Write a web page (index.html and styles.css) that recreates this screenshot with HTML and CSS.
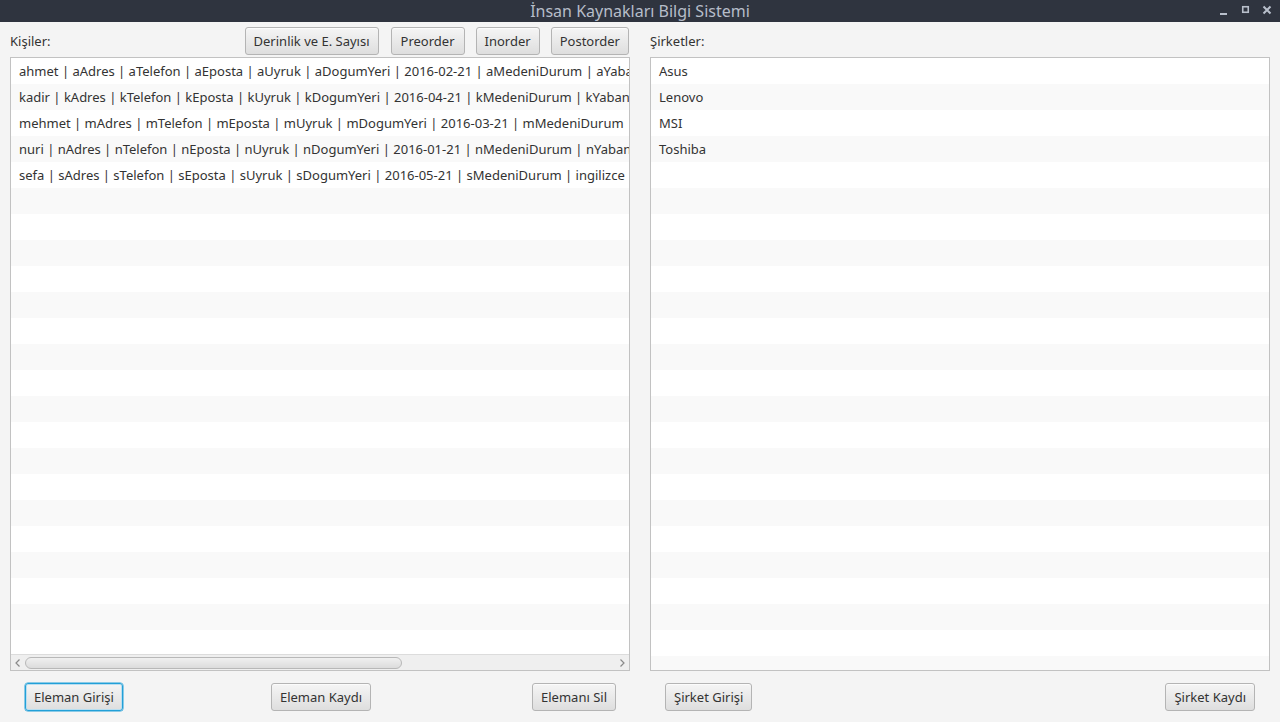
FILE: index.html
```html
<!DOCTYPE html>
<html lang="tr">
<head>
<meta charset="utf-8">
<title>İnsan Kaynakları Bilgi Sistemi</title>
<link rel="stylesheet" href="styles.css">
</head>
<body>
<div class="window">
  <div class="titlebar">
    <div class="title">İnsan Kaynakları Bilgi Sistemi</div>
    <div class="controls">
      <svg class="ctl" width="12" height="12" viewBox="0 0 12 12"><rect x="3" y="9" width="7" height="2" fill="#b8bfcb"/></svg>
      <svg class="ctl" width="12" height="12" viewBox="0 0 12 12"><rect x="3.75" y="2.75" width="5.5" height="5.5" fill="none" stroke="#b8bfcb" stroke-width="1.6"/></svg>
      <svg class="ctl" width="12" height="12" viewBox="0 0 12 12"><path d="M2.5 2.5 L9.5 9.5 M9.5 2.5 L2.5 9.5" stroke="#b8bfcb" stroke-width="2"/></svg>
    </div>
  </div>
  <div class="main">
    <div class="column">
      <div class="header">
        <span class="label">Kişiler:</span>
        <div class="btns">
          <button class="btn">Derinlik ve E. Sayısı</button>
          <button class="btn wide">Preorder</button>
          <button class="btn">Inorder</button>
          <button class="btn">Postorder</button>
        </div>
      </div>
      <div class="list">
        <div class="rows">
          <div class="row">ahmet | aAdres | aTelefon | aEposta | aUyruk | aDogumYeri | 2016-02-21 | aMedeniDurum | aYabanci</div>
          <div class="row">kadir | kAdres | kTelefon | kEposta | kUyruk | kDogumYeri | 2016-04-21 | kMedeniDurum | kYabanci</div>
          <div class="row">mehmet | mAdres | mTelefon | mEposta | mUyruk | mDogumYeri | 2016-03-21 | mMedeniDurum | mYabanci</div>
          <div class="row">nuri | nAdres | nTelefon | nEposta | nUyruk | nDogumYeri | 2016-01-21 | nMedeniDurum | nYabanci</div>
          <div class="row">sefa | sAdres | sTelefon | sEposta | sUyruk | sDogumYeri | 2016-05-21 | sMedeniDurum | ingilizce</div>
          <div class="row"></div><div class="row"></div><div class="row"></div><div class="row"></div><div class="row"></div>
          <div class="row"></div><div class="row"></div><div class="row"></div><div class="row"></div><div class="row"></div>
          <div class="row"></div><div class="row"></div><div class="row"></div><div class="row"></div><div class="row"></div>
          <div class="row"></div><div class="row"></div><div class="row"></div><div class="row"></div>
        </div>
        <div class="hscroll">
          <svg class="arrow" width="10" height="14" viewBox="0 0 10 14"><path d="M6.5 3.5 L3 7 L6.5 10.5" fill="none" stroke="#8a8a8a" stroke-width="1.2"/></svg>
          <div class="track"><div class="thumb"></div></div>
          <svg class="arrow" width="10" height="14" viewBox="0 0 10 14"><path d="M3.5 3.5 L7 7 L3.5 10.5" fill="none" stroke="#8a8a8a" stroke-width="1.2"/></svg>
        </div>
      </div>
      <div class="footer">
        <button class="btn focused">Eleman Girişi</button>
        <button class="btn middle">Eleman Kaydı</button>
        <button class="btn">Elemanı Sil</button>
      </div>
    </div>
    <div class="column">
      <div class="header">
        <span class="label">Şirketler:</span>
      </div>
      <div class="list">
        <div class="rows">
          <div class="row">Asus</div>
          <div class="row">Lenovo</div>
          <div class="row">MSI</div>
          <div class="row">Toshiba</div>
          <div class="row"></div><div class="row"></div><div class="row"></div><div class="row"></div><div class="row"></div><div class="row"></div>
          <div class="row"></div><div class="row"></div><div class="row"></div><div class="row"></div><div class="row"></div><div class="row"></div>
          <div class="row"></div><div class="row"></div><div class="row"></div><div class="row"></div><div class="row"></div><div class="row"></div>
          <div class="row"></div><div class="row"></div>
        </div>
      </div>
      <div class="footer">
        <button class="btn">Şirket Girişi</button>
        <button class="btn">Şirket Kaydı</button>
      </div>
    </div>
  </div>
</div>
</body>
</html>
```
FILE: styles.css
```css
* { box-sizing: border-box; }
html, body { margin: 0; padding: 0; }
body {
  width: 1280px;
  height: 722px;
  overflow: hidden;
  background: #f4f4f4;
  font-family: "Noto Sans", "Open Sans", sans-serif;
  font-size: 13px;
  color: #333333;
}
.window { display: flex; flex-direction: column; height: 722px; }
.titlebar {
  height: 22px;
  background: #2f343f;
  position: relative;
  display: flex;
  align-items: center;
  justify-content: center;
  flex-shrink: 0;
}
.title {
  color: #b6bdc9;
  font-size: 16px;
  line-height: 22px;
}
.controls {
  position: absolute;
  right: 7px;
  top: 4px;
  display: flex;
  gap: 10px;
}
.ctl { display: block; }
.main {
  flex: 1;
  display: flex;
  gap: 20px;
  padding: 5px 10px 11px 10px;
}
.column {
  width: 620px;
  display: flex;
  flex-direction: column;
}
.header {
  height: 28px;
  display: flex;
  align-items: center;
  justify-content: space-between;
  margin-bottom: 2px;
}
.btns { display: flex; gap: 11px; margin-right: 1px; }
.btns .btn:first-child { margin-right: 1px; }
.btn {
  font-family: inherit;
  font-size: 13px;
  color: #333333;
  height: 28px;
  padding: 0 8px;
  border: 1px solid #b4b4b4;
  border-radius: 3px;
  background: linear-gradient(#f5f5f5, #dedede);
  box-shadow: inset 0 1px 0 #fbfbfb;
  line-height: 26px;
  white-space: nowrap;
}
.btn.wide { padding: 0 9px; }
.btn.focused {
  border-color: #22a0d8;
  box-shadow: inset 0 0 0 1px #b9def0, 0 0 0 0.5px #22a0d8;
}
.btn.middle { margin-right: 13px; }
.list {
  height: 614px;
  border: 1px solid #c2c2c2;
  background: #ffffff;
  display: flex;
  flex-direction: column;
  overflow: hidden;
}
.rows { flex: 1; overflow: hidden; }
.row {
  height: 26px;
  line-height: 26px;
  padding-left: 8px;
  white-space: nowrap;
  background: #ffffff;
}
.row:nth-child(even) { background: #f9f9f9; }
.hscroll {
  height: 16px;
  flex-shrink: 0;
  border-top: 1px solid #dcdcdc;
  background: #efefef;
  display: flex;
  align-items: center;
  padding: 0 2px;
}
.arrow { display: block; flex-shrink: 0; }
.track { flex: 1; height: 14px; padding: 1px 0; display: flex; align-items: center; }
.thumb {
  width: 377px;
  height: 12px;
  margin-left: 2px;
  border: 1px solid #b8b8b8;
  border-radius: 6px;
  background: linear-gradient(#f0f0f0, #dcdcdc);
}
.footer {
  margin-top: 12px;
  display: flex;
  justify-content: space-between;
  padding: 0 15px;
}
.column:first-child .footer { padding-right: 14px; }
```
